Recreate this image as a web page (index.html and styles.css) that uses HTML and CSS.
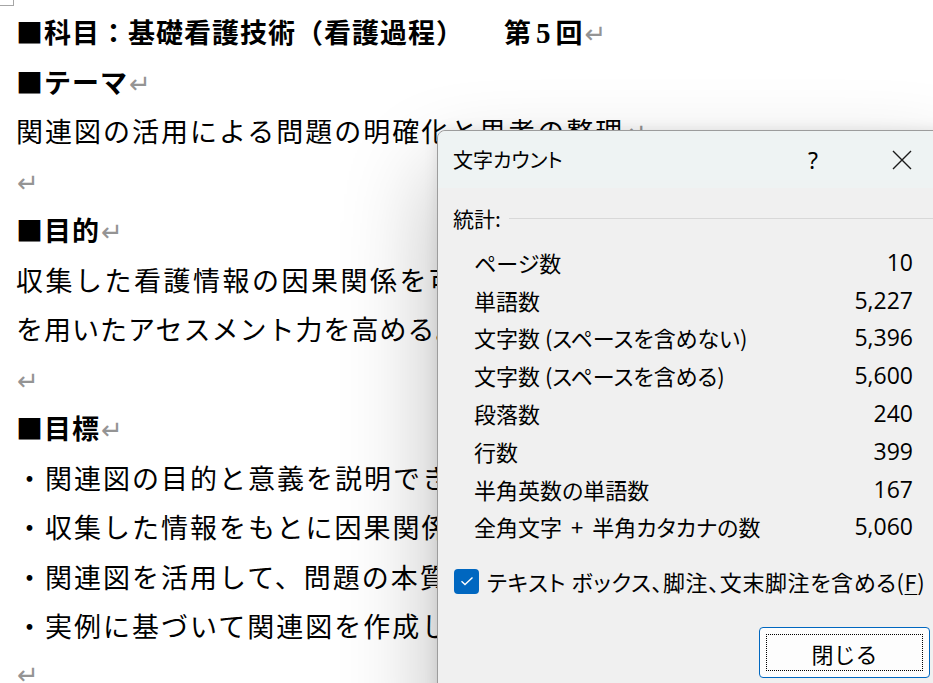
FILE: index.html
```html
<!DOCTYPE html>
<html lang="ja">
<head>
<meta charset="utf-8">
<title>文字カウント</title>
<link rel="stylesheet" href="styles.css">
</head>
<body>
<div class="page">
  <div class="crop"></div>
  <div class="doc">
    <div class="line head wide1">■科目：基礎看護技術（看護過程）<span class="gap"></span>第<span class="num">5</span>回<span class="ret">↵</span></div>
    <div class="line head">■テーマ<span class="ret">↵</span></div>
    <div class="line">関連図の活用による問題の明確化と思考の整理<span class="ret">↵</span></div>
    <div class="line"><span class="ret">↵</span></div>
    <div class="line head">■目的<span class="ret">↵</span></div>
    <div class="line wide3">収集した看護情報の因果関係を可視化し、関連図</div>
    <div class="line tight">を用いたアセスメント力を高める。<span class="ret">↵</span></div>
    <div class="line"><span class="ret">↵</span></div>
    <div class="line head">■目標<span class="ret">↵</span></div>
    <div class="line">・関連図の目的と意義を説明できる。<span class="ret">↵</span></div>
    <div class="line">・収集した情報をもとに因果関係を整理できる。<span class="ret">↵</span></div>
    <div class="line">・関連図を活用して、問題の本質を明確化できる。<span class="ret">↵</span></div>
    <div class="line">・実例に基づいて関連図を作成し、説明できる。<span class="ret">↵</span></div>
    <div class="line last"><span class="ret">↵</span></div>
  </div>

  <div class="dialog">
    <div class="titlebar">
      <span class="title">文字カウント</span>
      <span class="help">?</span>
      <span class="close">
        <svg width="20" height="20" viewBox="0 0 20 20"><path d="M1 1 L19 19 M19 1 L1 19" stroke="#1a1a1a" stroke-width="1.4" fill="none"/></svg>
      </span>
    </div>
    <div class="dbody">
      <div class="group"><span class="glabel">統計:</span><span class="rule"></span></div>
      <div class="stats">
        <div class="row"><span>ページ数</span><span class="val">10</span></div>
        <div class="row"><span>単語数</span><span class="val">5,227</span></div>
        <div class="row"><span>文字数 (スペースを含めない)</span><span class="val">5,396</span></div>
        <div class="row"><span>文字数 (スペースを含める)</span><span class="val">5,600</span></div>
        <div class="row"><span>段落数</span><span class="val">240</span></div>
        <div class="row"><span>行数</span><span class="val">399</span></div>
        <div class="row"><span>半角英数の単語数</span><span class="val">167</span></div>
        <div class="row"><span>全角文字<span class="plus">+</span>半角カタカナの数</span><span class="val">5,060</span></div>
      </div>
      <div class="check">
        <span class="box"><svg width="14" height="10" viewBox="0 0 14 10"><path d="M1.5 5.2 L5 8.5 L12.5 1.5" stroke="#fff" stroke-width="1.4" fill="none"/></svg></span>
        <span class="clabel">テキスト ボックス、脚注、文末脚注を含める(<u>F</u>)</span>
      </div>
      <div class="actions">
        <button class="btn"><span class="focus">閉じる</span></button>
      </div>
    </div>
  </div>
</div>
</body>
</html>
```

FILE: styles.css
```css
html, body {
  margin: 0;
  padding: 0;
  background: #ffffff;
}
.page {
  position: relative;
  width: 933px;
  height: 683px;
  overflow: hidden;
  background: #ffffff;
}
.crop {
  position: absolute;
  left: 0;
  top: 0;
  width: 13px;
  height: 5px;
  border-right: 1px solid #a6a6a6;
  border-bottom: 1px solid #a6a6a6;
}
.doc {
  padding: 7px 0 0 16px;
  font-family: "Noto Sans CJK JP", sans-serif;
  font-size: 27px;
  color: #000;
}
.line {
  height: 49.5px;
  line-height: 49.5px;
  white-space: nowrap;
  letter-spacing: 2px;
}
.line.last {
  line-height: 44px;
}
.line.head {
  font-weight: bold;
  letter-spacing: 1px;
}
.line.tight {
  letter-spacing: 1px;
}
.line.wide3 {
  letter-spacing: 2.5px;
}
.gap {
  display: inline-block;
  width: 40px;
}
.num {
  font-family: "Liberation Serif", serif;
  font-size: 29px;
  padding: 0 4px;
}
.ret {
  font-family: "DejaVu Sans", sans-serif;
  font-weight: normal;
  font-size: 26px;
  color: #949494;
  letter-spacing: 0;
  margin-left: 1px;
}

/* dialog */
.dialog {
  position: absolute;
  left: 437px;
  top: 130px;
  width: 520px;
  height: 600px;
  background: #f0f0f0;
  border: 1px solid #9c9c9c;
  border-radius: 8px 0 0 0;
  box-shadow: -6px 40px 90px rgba(0, 0, 0, 0.24), 0 0 14px rgba(0, 0, 0, 0.10);
  font-family: "Noto Sans", "Noto Sans CJK JP", sans-serif;
  color: #000;
  font-feature-settings: "palt";
}
.titlebar {
  height: 57px;
  display: flex;
  align-items: center;
  padding: 0 0 0 15px;
  background: #eef3f3;
  border-radius: 8px 0 0 0;
}
.title {
  flex: 1;
  font-size: 20px;
  font-family: "Noto Sans CJK JP", sans-serif;
}
.help {
  width: 30px;
  text-align: center;
  font-size: 23px;
  font-family: "Noto Sans", sans-serif;
  margin-right: 64px;
}
.close {
  width: 20px;
  height: 20px;
  margin-right: 46px;
  display: flex;
}
.dbody {
  padding: 18px 0 0 15px;
}
.group {
  display: flex;
  align-items: center;
  height: 24px;
  font-size: 21px;
  font-family: "Noto Sans CJK JP", sans-serif;
}
.glabel {
  line-height: 24px;
}
.rule {
  flex: 1;
  height: 1px;
  background: #d8d8d8;
  margin-left: 8px;
}
.stats {
  margin-top: 13px;
  padding: 0 45px 0 21px;
}
.row {
  display: flex;
  justify-content: space-between;
  align-items: center;
  height: 37.8px;
  font-size: 22px;
  font-family: "Noto Sans CJK JP", sans-serif;
}
.plus {
  margin: 0 9px;
}
.val {
  font-family: "Open Sans", sans-serif;
  font-size: 23px;
}
.check {
  margin-top: 21px;
  display: flex;
  align-items: center;
  height: 30px;
}
.box {
  width: 25px;
  height: 25px;
  border-radius: 4px;
  background: #0067c0;
  display: flex;
  align-items: center;
  justify-content: center;
  margin-left: 1px;
}
.clabel {
  margin-left: 8px;
  font-size: 22px;
  letter-spacing: 0.6px;
  font-family: "Noto Sans CJK JP", sans-serif;
}
.clabel u {
  text-decoration-thickness: 1px;
  text-underline-offset: 3px;
}
.actions {
  display: flex;
  padding-left: 306px;
  margin-top: 31px;
}
.btn {
  width: 171px;
  height: 51px;
  padding: 6px;
  border: 1.5px solid #0067c0;
  border-radius: 4px;
  background: #fdfdfd;
  box-sizing: border-box;
  display: flex;
  font-family: "Noto Sans CJK JP", sans-serif;
}
.focus {
  flex: 1;
  border: 1px dotted #000;
  display: flex;
  align-items: center;
  justify-content: center;
  font-size: 22px;
  color: #000;
}
```
